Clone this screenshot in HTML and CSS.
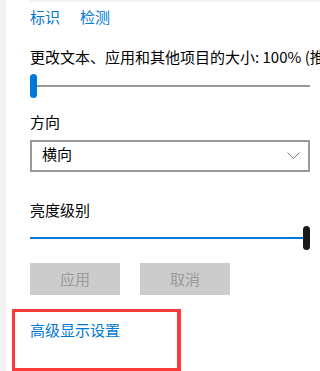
FILE: index.html
```html
<!DOCTYPE html>
<html lang="zh-CN">
<head>
<meta charset="utf-8">
<link rel="stylesheet" href="styles.css">
</head>
<body>
<div class="page">
  <div class="rail"></div>
  <div class="main">
    <div class="topline"></div>
    <div class="content">
      <div class="links"><span class="link">标识</span><span class="link">检测</span></div>
      <div class="label first">更改文本、应用和其他项目的大小: 100% (推荐)</div>
      <div class="slider scale">
        <div class="thumb blue"></div>
        <div class="track gray"></div>
      </div>
      <div class="label dir">方向</div>
      <div class="select">
        <span class="value">横向</span>
        <svg class="chev" width="13" height="7" viewBox="0 0 13 7"><polyline points="0.5,0.5 6.5,6.5 12.5,0.5" fill="none" stroke="#7a7a7a" stroke-width="1"/></svg>
      </div>
      <div class="label bright">亮度级别</div>
      <div class="slider level">
        <div class="track blue"></div>
        <div class="thumb dark"></div>
      </div>
      <div class="buttons">
        <div class="btn">应用</div>
        <div class="btn">取消</div>
      </div>
      <div class="mark">
        <span class="link">高级显示设置</span>
      </div>
    </div>
  </div>
</div>
</body>
</html>
```
FILE: styles.css
```css
html, body {
  margin: 0;
  padding: 0;
  background: #ffffff;
}
body {
  width: 320px;
  height: 371px;
  overflow: hidden;
  font-family: "Noto Sans CJK SC", "Noto Sans", sans-serif;
  font-size: 15px;
  line-height: 20px;
  color: #000000;
}
.page {
  display: flex;
  height: 371px;
}
.rail {
  width: 6px;
  flex: none;
  background: #f2f2f2;
}
.main {
  flex: 1;
  min-width: 0;
}
.topline {
  margin-left: 24px;
  height: 2px;
  background: #f2f2f2;
}
.content {
  padding-left: 24px;
  padding-right: 10px;
}
.links {
  margin-top: 5px;
  display: flex;
  gap: 20px;
}
.link {
  color: #0078d7;
}
.label {
  white-space: nowrap;
}
.label.first {
  margin-top: 20px;
  margin-right: -10px;
  overflow: hidden;
}
.slider {
  display: flex;
  align-items: center;
  height: 24px;
}
.slider.scale {
  margin-top: 7px;
}
.thumb {
  width: 7px;
  height: 24px;
  border-radius: 4px;
  flex: none;
}
.thumb.blue {
  background: #0078d7;
}
.thumb.dark {
  background: #1a1a1a;
}
.track {
  flex: 1;
  height: 2px;
}
.track.gray {
  background: #999999;
}
.track.blue {
  background: #0078d7;
}
.label.dir {
  margin-top: 14px;
}
.select {
  margin-top: 8px;
  height: 32px;
  box-sizing: border-box;
  border: 2px solid #999999;
  display: flex;
  align-items: flex-start;
  justify-content: space-between;
  padding: 0 8px 0 10px;
  line-height: 24px;
}
.chev {
  margin-top: 10px;
}
.label.bright {
  margin-top: 28px;
}
.slider.level {
  margin-top: 6px;
}
.buttons {
  margin-top: 13px;
  display: flex;
  gap: 20px;
}
.btn {
  width: 90px;
  height: 32px;
  background: #cccccc;
  color: #9a9a9a;
  display: flex;
  align-items: center;
  justify-content: center;
}
.mark {
  margin-top: 14px;
  margin-left: -18px;
  width: 169px;
  height: 62px;
  box-sizing: border-box;
  border: 3px solid #fb3a3a;
  border-right-width: 4px;
  padding: 8px 0 0 15px;
}
```
